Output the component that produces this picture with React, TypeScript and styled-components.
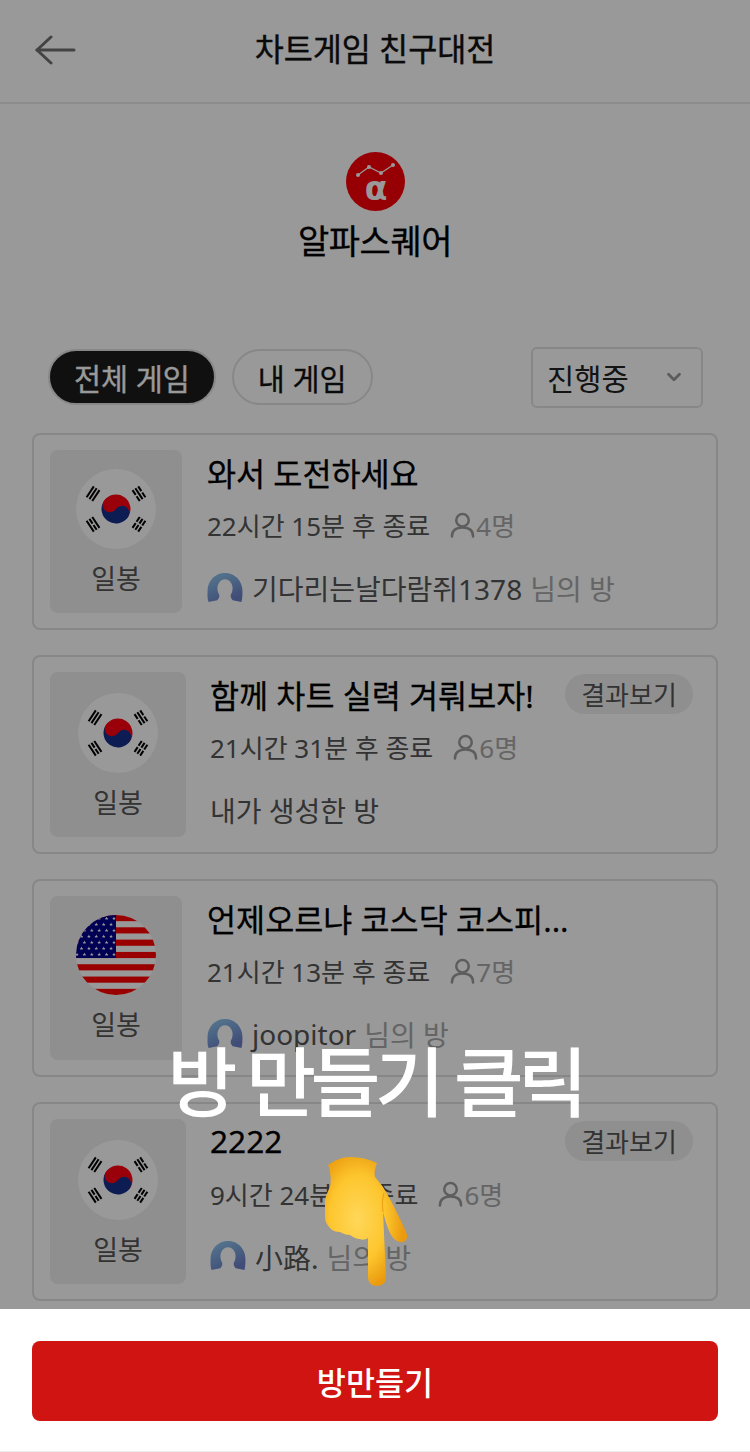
import { createGlobalStyle } from "styled-components";
import styled from "styled-components";
import { ChevronDown } from "lucide-react";

const GlobalStyle = createGlobalStyle`
  * {
    box-sizing: border-box;
  }
  body {
    margin: 0;
    background: #fff;
    font-family: "Noto Sans", "Noto Sans CJK KR", sans-serif;
  }
`;

type Flag = "kr" | "us";

interface Room {
  flag: Flag;
  title: string;
  remain: string;
  count: string;
  owner?: string;
  result?: boolean;
}

const rooms: Room[] = [
  { flag: "kr", title: "와서 도전하세요", remain: "22시간 15분 후 종료", count: "4명", owner: "기다리는날다람쥐1378" },
  { flag: "kr", title: "함께 차트 실력 겨뤄보자!", remain: "21시간 31분 후 종료", count: "6명", result: true },
  { flag: "us", title: "언제오르냐 코스닥 코스피...", remain: "21시간 13분 후 종료", count: "7명", owner: "joopitor" },
  { flag: "kr", title: "2222", remain: "9시간 24분 후 종료", count: "6명", owner: "小路.", result: true },
];

const BackIcon = () => (
  <svg width="42" height="32" viewBox="0 0 42 32" fill="none" stroke="#707070" strokeWidth="3" strokeLinecap="round" strokeLinejoin="round">
    <path d="M2 16H39" />
    <path d="M16 3L2 16L16 29" />
  </svg>
);

const LogoIcon = () => (
  <svg width="59" height="59" viewBox="0 0 59 59">
    <circle cx="29.5" cy="29.5" r="29.5" fill="#fb0008" />
    <path d="M12 23L23 15L35 21L47 13" fill="none" stroke="#fff" strokeWidth="1.200" />
    <circle cx="12" cy="23" r="2" fill="#fff" />
    <circle cx="23" cy="15" r="2" fill="#fff" />
    <circle cx="35" cy="21" r="2" fill="#fff" />
    <circle cx="47" cy="13" r="2" fill="#fff" />
    <text x="30" y="48" textAnchor="middle" fontFamily="'DejaVu Sans', sans-serif" fontWeight="700" fontSize="33" fill="#fff">
      α
    </text>
  </svg>
);

const Trigram = ({ angle, splits }: { angle: number; splits: boolean[] }) => (
  <g transform={`rotate(${angle} 40 40)`}>
    {splits.map((split, i) => {
      const y = 9 + i * 3.4;
      return split ? (
        <g key={i} stroke="#000" strokeWidth="2">
          <path d={`M33.500 ${y}H39.200`} />
          <path d={`M40.800 ${y}H46.500`} />
        </g>
      ) : (
        <path key={i} d={`M33.500 ${y}H46.500`} stroke="#000" strokeWidth="2" />
      );
    })}
  </g>
);

const KoreaFlag = () => (
  <svg width="80" height="80" viewBox="0 0 80 80">
    <circle cx="40" cy="40" r="40" fill="#fff" />
    <g transform="rotate(33.7 40 40)">
      <path d="M25.500 40A14.500 14.500 0 0 1 54.500 40Z" fill="#ff0010" />
      <path d="M25.500 40A14.500 14.500 0 0 0 54.500 40Z" fill="#16318a" />
      <circle cx="32.750" cy="40" r="7.250" fill="#ff0010" />
      <circle cx="47.250" cy="40" r="7.250" fill="#16318a" />
    </g>
    <Trigram angle={-56.300} splits={[false, false, false]} />
    <Trigram angle={56.300} splits={[true, false, true]} />
    <Trigram angle={-123.700} splits={[false, true, false]} />
    <Trigram angle={123.700} splits={[true, true, true]} />
  </svg>
);

const starPoints = "0,-2 0.590,-0.620 1.900,-0.620 0.850,0.240 1.180,1.620 0,0.800 -1.180,1.620 -0.850,0.240 -1.900,-0.620 -0.590,-0.620";

const UsaFlag = () => {
  const stars: [number, number][] = [];
  for (let row = 0; row < 7; row++) {
    const odd = row % 2 === 1;
    for (let col = 0; col < (odd ? 5 : 6); col++) {
      stars.push([(odd ? 5.500 : 1) + col * 7.400, 3.500 + row * 6]);
    }
  }
  return (
    <svg width="80" height="80" viewBox="0 0 80 80">
      <defs>
        <clipPath id="usa-circle">
          <circle cx="40" cy="40" r="40" />
        </clipPath>
      </defs>
      <g clipPath="url(#usa-circle)">
        <rect width="80" height="80" fill="#fff" />
        {Array.from({ length: 7 }, (_, i) => (
          <rect key={i} y={i * 12.310} width="80" height="6.150" fill="#ff0000" />
        ))}
        <rect width="40" height="43" fill="#00008c" />
        {stars.map(([x, y], i) => (
          <polygon key={i} points={starPoints} transform={`translate(${x} ${y})`} fill="#fff" />
        ))}
      </g>
    </svg>
  );
};

const PersonIcon = () => (
  <svg width="25" height="28" viewBox="0 0 26 28" fill="none" stroke="#9c9c9c" strokeWidth="2.600" strokeLinecap="round">
    <circle cx="13" cy="9" r="6.500" />
    <path d="M2 26C2 20 6 16.500 13 16.500C20 16.500 24 20 24 26" />
  </svg>
);

const Avatar = () => (
  <svg width="36" height="31" viewBox="0 0 36 32">
    <defs>
      <linearGradient id="avatar-fill" x1="0" y1="0" x2="0.500" y2="1">
        <stop offset="0" stopColor="#90ccf0" />
        <stop offset="1" stopColor="#6c80c8" />
      </linearGradient>
    </defs>
    <path
      d="M1 30C-0.500 26 0 21 0 18C0 8 8 0 18 0C28 0 36 8 36 18C36 22 36 26 35 30L26 28C24 26 23.500 24 24 22.500C26 19 26.500 15 25 11.500C23.500 8 21 6.500 18 6.500C15 6.500 12.500 8 11 11.500C9.500 15 10 19 12 22.500C12.500 24 12 26 10 28Z"
      fill="url(#avatar-fill)"
    />
  </svg>
);

const HandIcon = () => (
  <svg width="84" height="130" viewBox="0 0 84 130">
    <defs>
      <radialGradient id="hand-fill" cx="0.400" cy="0.480" r="0.560">
        <stop offset="0" stopColor="#ffd75a" />
        <stop offset="0.600" stopColor="#fdc62e" />
        <stop offset="1" stopColor="#ea9a0e" />
      </radialGradient>
    </defs>
    <path
      d="M3 8C10 3 17 0 25 0C35 0 44 2 52 6C50 11 49 16 50 20C53 24 56 27 58 30C63 38 68 47 72 56C76 64 80 72 82 78C83 83 79 86 75 85C70 84 67 80 65 76C62 70 60 62 58 55C59 76 60 98 61 120C61 126 57 129 52 129C47 129 43 126 43 120L43 81C40 83 37 83 35 82C31 82 28 80 25 78C22 78 18 77 15 75C11 75 8 74 5 71C2 68 0 64 0 60C-1 54 0 48 0 43C1 38 3 34 5 30C6 25 6 20 5 16C5 13 4 10 3 8Z"
      fill="url(#hand-fill)"
    />
    <path d="M58 55C57 48 57 42 59 36" fill="none" stroke="#eda414" strokeWidth="1.200" />
  </svg>
);

const App = () => {
  return (
    <Screen>
      <GlobalStyle />
      <Header>
        <BackButton>
          <BackIcon />
        </BackButton>
        <HeaderTitle>차트게임 친구대전</HeaderTitle>
      </Header>

      <Brand>
        <LogoIcon />
        <BrandName>알파스퀘어</BrandName>
      </Brand>

      <Toolbar>
        <Tab $active>전체 게임</Tab>
        <Tab>내 게임</Tab>
        <Select>
          진행중
          <ChevronDown size={22} strokeWidth={3} color="#999" />
        </Select>
      </Toolbar>

      <List>
        {rooms.map((room) => (
          <Card key={room.title} $tall={!!room.result}>
            <Thumb $wide={!!room.result}>
              {room.flag === "kr" ? <KoreaFlag /> : <UsaFlag />}
              <ThumbLabel>일봉</ThumbLabel>
            </Thumb>
            <Body>
              <TitleRow>
                <Title>{room.title}</Title>
                {room.result && <ResultBadge>결과보기</ResultBadge>}
              </TitleRow>
              <Meta>
                <span>{room.remain}</span>
                <People>
                  <PersonIcon />
                  {room.count}
                </People>
              </Meta>
              {room.owner ? (
                <Owner>
                  <Avatar />
                  <OwnerName>{room.owner}</OwnerName>
                  <OwnerSuffix>님의 방</OwnerSuffix>
                </Owner>
              ) : (
                <Owner>
                  <MineLabel>내가 생성한 방</MineLabel>
                </Owner>
              )}
            </Body>
          </Card>
        ))}
      </List>

      <Dim>
        <Guide>방 만들기 클릭</Guide>
        <HandSlot>
          <HandIcon />
        </HandSlot>
      </Dim>

      <Footer>
        <CreateButton>방만들기</CreateButton>
      </Footer>
    </Screen>
  );
};

export default App;

const Screen = styled.div`
  position: relative;
  width: 750px;
  height: 1452px;
  overflow: hidden;
  background: #fff;
`;

const Header = styled.header`
  position: relative;
  display: flex;
  align-items: center;
  justify-content: center;
  height: 104px;
  padding-bottom: 8px;
  border-bottom: 2px solid #ececec;
`;

const BackButton = styled.div`
  position: absolute;
  left: 35px;
  top: 34px;
  display: flex;
`;

const HeaderTitle = styled.h1`
  margin: 0;
  font-size: 31.600px;
  font-weight: 400;
  -webkit-text-stroke: 0.400px #111;
  color: #111;
`;

const Brand = styled.div`
  display: flex;
  flex-direction: column;
  align-items: center;
  padding-top: 48px;
`;

const BrandName = styled.div`
  margin-top: 5px;
  font-size: 34px;
  line-height: 50px;
  font-weight: 400;
  -webkit-text-stroke: 0.300px #000;
  letter-spacing: -0.500px;
  color: #000;
`;

const Toolbar = styled.div`
  display: flex;
  align-items: center;
  gap: 16px;
  height: 62px;
  margin-top: 80px;
  padding: 0 47px 0 48px;
`;

const Tab = styled.div<{ $active?: boolean }>`
  display: flex;
  align-items: center;
  justify-content: center;
  height: 56px;
  padding: 0 24px;
  border: 2px solid #e2e2e2;
  border-radius: 28px;
  background: ${({ $active }) => ($active ? "#1c1c1c" : "transparent")};
  font-size: 29.400px;
  -webkit-text-stroke: 0.300px ${({ $active }) => ($active ? "#fff" : "#111")};
  color: ${({ $active }) => ($active ? "#fff" : "#111")};
`;

const Select = styled.div`
  display: flex;
  align-items: center;
  justify-content: space-between;
  width: 172px;
  height: 61px;
  margin-left: auto;
  padding: 0 16px 0 14px;
  border: 2px solid #e2e2e2;
  border-radius: 6px;
  font-size: 29.600px;
  color: #222;
`;

const List = styled.div`
  display: flex;
  flex-direction: column;
  gap: 25px;
  margin-top: 25px;
  padding: 0 32px;
`;

const Card = styled.article<{ $tall: boolean }>`
  display: flex;
  height: ${({ $tall }) => ($tall ? "199px" : "197.400px")};
  padding: 15px 23px 15px 16px;
  border: 2px solid #e2e2e2;
  border-radius: 8px;
`;

const Thumb = styled.div<{ $wide: boolean }>`
  display: flex;
  flex-direction: column;
  align-items: center;
  flex: none;
  width: ${({ $wide }) => ($wide ? "136px" : "132px")};
  margin-right: ${({ $wide }) => ($wide ? "24px" : "25px")};
  padding-top: ${({ $wide }) => ($wide ? "21px" : "19px")};
  border-radius: 8px;
  background: #eee;
`;

const ThumbLabel = styled.div`
  margin-top: 11px;
  font-size: 27px;
  line-height: 38px;
  color: #555;
`;

const Body = styled.div`
  display: flex;
  flex-direction: column;
  flex: 1;
  min-width: 0;
`;

const TitleRow = styled.div`
  display: flex;
  align-items: center;
  justify-content: space-between;
  height: 44px;
`;

const Title = styled.div`
  font-size: 31.600px;
  font-weight: 400;
  -webkit-text-stroke: 0.300px #000;
  color: #000;
  white-space: nowrap;
`;

const ResultBadge = styled.div`
  display: flex;
  align-items: center;
  justify-content: center;
  width: 128px;
  height: 40px;
  border-radius: 20px;
  background: #eee;
  font-size: 26px;
  color: #555;
`;

const Meta = styled.div`
  display: flex;
  align-items: center;
  gap: 20px;
  height: 36px;
  margin-top: 13px;
  font-size: 26px;
  color: #555;
`;

const People = styled.span`
  display: flex;
  align-items: center;
  gap: 1px;
  color: #a8a8a8;
`;

const Owner = styled.div`
  display: flex;
  align-items: center;
  height: 38px;
  margin-top: 26px;
  font-size: 28px;
`;

const OwnerName = styled.span`
  margin-left: 9px;
  color: #555;
`;

const MineLabel = styled.span`
  color: #555;
`;

const OwnerSuffix = styled.span`
  margin-left: 8px;
  color: #a8a8a8;
`;

const Dim = styled.div`
  position: absolute;
  top: 0;
  left: 0;
  right: 0;
  height: 1309px;
  display: flex;
  flex-direction: column;
  align-items: center;
  justify-content: flex-end;
  padding-bottom: 22px;
  background: rgba(0, 0, 0, 0.4);
`;

const Guide = styled.div`
  margin-bottom: 20px;
  font-size: 76px;
  line-height: 110px;
  font-weight: 500;
  letter-spacing: -5.500px;
  color: #fff;
`;

const HandSlot = styled.div`
  display: flex;
  margin-right: 16px;
`;

const Footer = styled.footer`
  position: absolute;
  left: 0;
  right: 0;
  bottom: 0;
  height: 143px;
  padding: 32px 32px 0;
  border-bottom: 1px solid #eee;
  background: #fff;
`;

const CreateButton = styled.button`
  display: block;
  width: 100%;
  height: 80px;
  border: 0;
  border-radius: 8px;
  background: #d01411;
  font-family: inherit;
  font-size: 31.600px;
  font-weight: 500;
  color: #fff;
`;
